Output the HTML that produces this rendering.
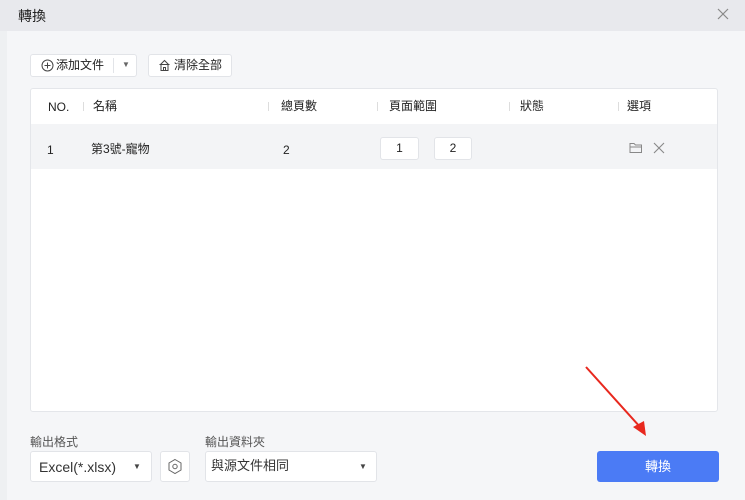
<html><head><style>
body{margin:0;width:745px;height:500px;background:#f5f6f8;font-family:"Liberation Sans","Noto Sans CJK TC",sans-serif;font-size:12px;line-height:14px;color:#222;position:relative;overflow:hidden}
.a{position:absolute;line-height:14px}
.btn{position:absolute;background:#fff;border:1px solid #e2e4e8;border-radius:3px;box-sizing:border-box}
</style></head><body>
<div class="a" style="left:0;top:0;width:745px;height:31px;background:#e8e9ed"></div>
<div class="a" style="left:0;top:31px;width:7px;height:469px;background:#eef0f2"></div>
<div class="a" style="left:18px;top:8px;font-size:14px;line-height:16px">轉換</div>
<svg class="a" style="left:717px;top:8px" width="12" height="12"><path d="M1 1L11 11M11 1L1 11" stroke="#888" stroke-width="1.2"/></svg>

<div class="btn" style="left:30px;top:54px;width:107px;height:23px"></div>
<div class="a" style="left:113px;top:58px;width:1px;height:15px;background:#e2e4e8"></div>
<svg class="a" style="left:41px;top:59px" width="13" height="13"><circle cx="6.5" cy="6.5" r="5.5" fill="none" stroke="#444"/><path d="M6.5 3.5v6M3.5 6.5h6" stroke="#444"/></svg>
<div class="a" style="left:56px;top:58px">添加文件</div>
<div class="a" style="left:122px;top:61px;font-size:8px;line-height:8px;color:#666">▼</div>
<div class="btn" style="left:148px;top:54px;width:84px;height:23px"></div>
<svg class="a" style="left:158px;top:59px" width="13" height="13"><path d="M1.5 5.5h10M3 5.5v6h7v-6M2.5 5.5L6.5 1.5L10.5 5.5M5.5 11.5v-3h2v3" fill="none" stroke="#444"/></svg>
<div class="a" style="left:174px;top:58px">清除全部</div>

<div class="a" style="left:30px;top:88px;width:688px;height:324px;background:#fff;border:1px solid #e4e6ea;border-radius:3px;box-sizing:border-box"></div>
<div class="a" style="left:31px;top:124px;width:686px;height:45px;background:#f3f4f6"></div>
<div class="a" style="left:48px;top:100px">NO.</div>
<div class="a" style="left:93px;top:99px">名稱</div>
<div class="a" style="left:281px;top:99px">總頁數</div>
<div class="a" style="left:389px;top:99px">頁面範圍</div>
<div class="a" style="left:520px;top:99px">狀態</div>
<div class="a" style="left:627px;top:99px">選項</div>
<div class="a" style="left:83px;top:102px;width:1px;height:9px;background:#ddd"></div>
<div class="a" style="left:268px;top:102px;width:1px;height:9px;background:#ddd"></div>
<div class="a" style="left:377px;top:102px;width:1px;height:9px;background:#ddd"></div>
<div class="a" style="left:509px;top:102px;width:1px;height:9px;background:#ddd"></div>
<div class="a" style="left:618px;top:102px;width:1px;height:9px;background:#ddd"></div>
<div class="a" style="left:47px;top:143px">1</div>
<div class="a" style="left:91px;top:142px">第3號-寵物</div>
<div class="a" style="left:283px;top:143px">2</div>
<div class="btn" style="left:380px;top:137px;width:39px;height:23px;text-align:center;line-height:21px">1</div>
<div class="btn" style="left:434px;top:137px;width:38px;height:23px;text-align:center;line-height:21px">2</div>
<svg class="a" style="left:629px;top:142px" width="14" height="12"><path d="M1 1.5h4l1.5 1.5h6v7.5h-11.5zM1 5h11.5" fill="none" stroke="#888"/></svg>
<svg class="a" style="left:653px;top:142px" width="12" height="12"><path d="M1 1L11 11M11 1L1 11" stroke="#888" stroke-width="1.1"/></svg>

<svg class="a" style="left:0;top:0" width="745" height="500"><path d="M586 367L641 428" stroke="#e8281e" stroke-width="2"/><path d="M646 436L633 427L644 421z" fill="#e8281e"/></svg>

<div class="a" style="left:30px;top:435px;color:#555">輸出格式</div>
<div class="btn" style="left:30px;top:451px;width:122px;height:31px"></div>
<div class="a" style="left:39px;top:459px;font-size:14px;line-height:16px;color:#333">Excel(*.xlsx)</div>
<div class="a" style="left:133px;top:463px;font-size:8px;line-height:8px;color:#444">▼</div>
<div class="btn" style="left:160px;top:451px;width:30px;height:31px"></div>
<svg class="a" style="left:167px;top:458px" width="16" height="17"><path d="M8 1.5L14 5v7L8 15.5L2 12V5z" fill="none" stroke="#666"/><circle cx="8" cy="8.5" r="2.2" fill="none" stroke="#666"/></svg>
<div class="a" style="left:205px;top:435px;color:#555">輸出資料夾</div>
<div class="btn" style="left:205px;top:451px;width:172px;height:31px"></div>
<div class="a" style="left:211px;top:458px;font-size:13px;line-height:16px;color:#333">與源文件相同</div>
<div class="a" style="left:359px;top:463px;font-size:8px;line-height:8px;color:#444">▼</div>
<div class="a" style="left:597px;top:451px;width:122px;height:31px;background:#4b7bf5;border-radius:3px;color:#fff;text-align:center;line-height:31px;font-size:13px">轉換</div>
</body></html>
